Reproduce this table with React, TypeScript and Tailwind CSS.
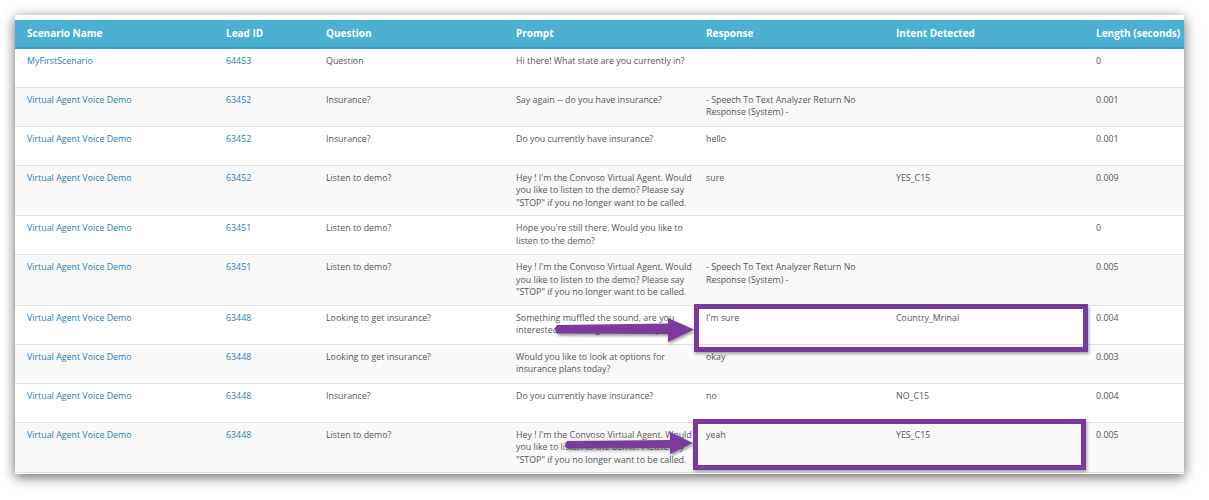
import React from 'react';

type Row = {
  scenario: string;
  lead: string;
  question: string;
  prompt: string[];
  response: string[];
  intent: string;
  length: string;
};

const HEY = [
  "Hey ! I'm the Convoso Virtual Agent. Would",
  'you like to listen to the demo? Please say',
  '"STOP" if you no longer want to be called.',
];
const STT = ['- Speech To Text Analyzer Return No', 'Response (System) -'];
const VAVD = 'Virtual Agent Voice Demo';

const rows: Row[] = [
  { scenario: 'MyFirstScenario', lead: '64453', question: 'Question', prompt: ['Hi there! What state are you currently in?'], response: [], intent: '', length: '0' },
  { scenario: VAVD, lead: '63452', question: 'Insurance?', prompt: ['Say again -- do you have insurance?'], response: STT, intent: '', length: '0.001' },
  { scenario: VAVD, lead: '63452', question: 'Insurance?', prompt: ['Do you currently have insurance?'], response: ['hello'], intent: '', length: '0.001' },
  { scenario: VAVD, lead: '63452', question: 'Listen to demo?', prompt: HEY, response: ['sure'], intent: 'YES_C15', length: '0.009' },
  { scenario: VAVD, lead: '63451', question: 'Listen to demo?', prompt: ["Hope you're still there. Would you like to", 'listen to the demo?'], response: [], intent: '', length: '0' },
  { scenario: VAVD, lead: '63451', question: 'Listen to demo?', prompt: HEY, response: STT, intent: '', length: '0.005' },
  { scenario: VAVD, lead: '63448', question: 'Looking to get insurance?', prompt: ['Something muffled the sound, are you', 'interested in looking at insurance plans?'], response: ["I'm sure"], intent: 'Country_Mrinal', length: '0.004' },
  { scenario: VAVD, lead: '63448', question: 'Looking to get insurance?', prompt: ['Would you like to look at options for', 'insurance plans today?'], response: ['okay'], intent: '', length: '0.003' },
  { scenario: VAVD, lead: '63448', question: 'Insurance?', prompt: ['Do you currently have insurance?'], response: ['no'], intent: 'NO_C15', length: '0.004' },
  { scenario: VAVD, lead: '63448', question: 'Listen to demo?', prompt: HEY, response: ['yeah'], intent: 'YES_C15', length: '0.005' },
];

const Lines: React.FC<{ lines: string[] }> = ({ lines }) => (
  <>
    {lines.map((l, i) => (
      <div key={i} className="whitespace-nowrap">{l}</div>
    ))}
  </>
);

const App: React.FC = () => {
  return (
    <div className="relative w-[1209px] h-[500px] bg-white overflow-hidden" style={{ fontFamily: '"Open Sans", "Liberation Sans", sans-serif' }}>
      <div className="pl-[15px] pt-[15px]">
        <div className="w-[1169px] h-[459px] bg-white pt-[5px] overflow-hidden shadow-[0_3px_12px_rgba(0,0,0,0.6)]">
          <table className="border-collapse table-fixed w-[1209px]">
            <colgroup>
              <col className="w-[199px]" />
              <col className="w-[100px]" />
              <col className="w-[190px]" />
              <col className="w-[190px]" />
              <col className="w-[190px]" />
              <col className="w-[200px]" />
              <col className="w-[140px]" />
            </colgroup>
            <thead>
              <tr className="bg-[#4bb0d2] h-[28px] border-b-2 border-[#3d9dbf]">
                {['Scenario Name', 'Lead ID', 'Question', 'Prompt', 'Response', 'Intent Detected', 'Length (seconds)'].map((h) => (
                  <th key={h} className="text-left px-3 text-white font-bold text-[10px] whitespace-nowrap align-middle">
                    {h}
                  </th>
                ))}
              </tr>
            </thead>
            <tbody>
              {rows.map((r, i) => (
                <tr key={i} className={`h-[39px] border-b border-[#e2e2e2] ${i % 2 === 1 ? 'bg-[#f9f9f9]' : 'bg-white'}`}>
                  <td className="align-top px-3 pt-[6px] pb-[6px] text-[8.85px] leading-[12.5px] text-[#2c7bb3]">{r.scenario}</td>
                  <td className="align-top px-3 pt-[6px] pb-[6px] text-[8.85px] leading-[12.5px] text-[#2c7bb3]">{r.lead}</td>
                  <td className="align-top px-3 pt-[6px] pb-[6px] text-[8.85px] leading-[12.5px] text-[#555]">{r.question}</td>
                  <td className="align-top px-3 pt-[6px] pb-[6px] text-[8.85px] leading-[12.5px] text-[#555]"><Lines lines={r.prompt} /></td>
                  <td className="align-top px-3 pt-[6px] pb-[6px] text-[8.85px] leading-[12.5px] text-[#555]"><Lines lines={r.response} /></td>
                  <td className="align-top px-3 pt-[6px] pb-[6px] text-[8.85px] leading-[12.5px] text-[#555]">{r.intent}</td>
                  <td className="align-top px-3 pt-[6px] pb-[6px] text-[8.85px] leading-[12.5px] text-[#555]">{r.length}</td>
                </tr>
              ))}
            </tbody>
          </table>
        </div>
      </div>

      {/* annotation overlay */}
      <div className="absolute left-[694px] top-[304px] w-[394px] h-[48px] border-[5px] border-[#7a3a9c] shadow-[1px_2px_3px_rgba(0,0,0,0.35)]" />
      <div className="absolute left-[693px] top-[419px] w-[393px] h-[51px] border-[5px] border-[#7a3a9c] shadow-[1px_2px_3px_rgba(0,0,0,0.35)]" />
      <svg className="absolute left-0 top-0 pointer-events-none" width="1209" height="500" viewBox="0 0 1209 500">
        <defs>
          <filter id="ash" x="-10%" y="-50%" width="120%" height="200%">
            <feDropShadow dx="1" dy="2" stdDeviation="1.5" floodColor="#000" floodOpacity="0.4" />
          </filter>
        </defs>
        <path d="M557 325 L668 323.5 L668 318 L694 329.5 L668 342 L668 334 L557 333.5 Q553 329 557 325 Z" fill="#7a3a9c" filter="url(#ash)" />
        <path d="M567 441 L670 440 L670 432 L693 443 L670 454 L670 448 L567 448.5 Q563 445 567 441 Z" fill="#7a3a9c" filter="url(#ash)" />
      </svg>
    </div>
  );
};

export default App;
